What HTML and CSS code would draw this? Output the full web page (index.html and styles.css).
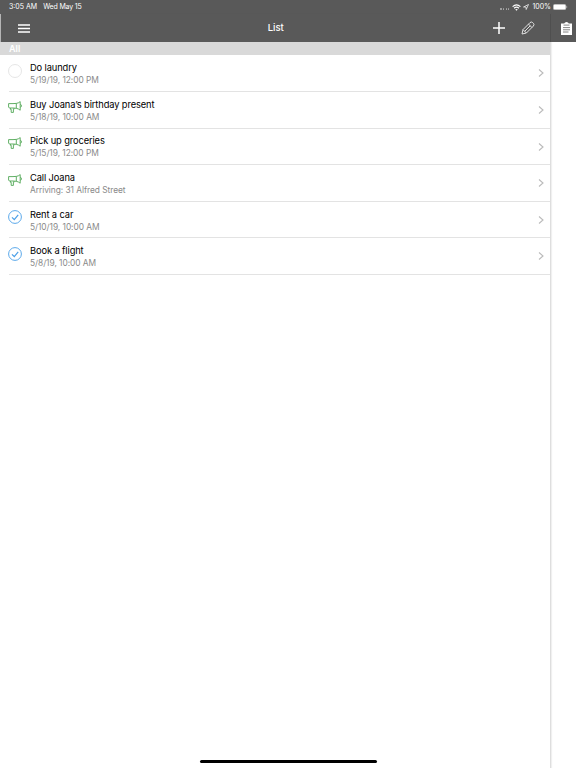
FILE: index.html
```html
<!DOCTYPE html>
<html lang="en">
<head>
    <meta charset="UTF-8">
    <meta name="viewport" content="width=device-width, initial-scale=1.0">
    <title>List</title>
    <link rel="stylesheet" href="styles.css">
</head>
<body>

    <!-- shared icons -->
    <svg class="defs" width="0" height="0">
        <symbol id="horn" viewBox="0 0 14 12">
            <path d="M0.6 2.6H5L8.3 2.4Q10.5 2.1 12.2 0.6V9.2Q10.5 7.7 8.3 7.3L5 7H1.4L0.6 6ZM8.3 2.4V7.3M2.4 7V8.3H3.2V11.4H5.4V8.3H6V7M12.4 3.4Q13.5 3.6 13.5 4.8Q13.5 6 12.4 6.2"/>
        </symbol>
        <symbol id="done" viewBox="0 0 14 14">
            <circle cx="7" cy="7" r="6.4"/>
            <path d="M4 7.3L6.3 9.6L10.2 4.9" stroke-width="1.2"/>
        </symbol>
        <symbol id="arrow" viewBox="0 0 6 8">
            <path d="M1 0.5L5 4L1 7.5"/>
        </symbol>
    </svg>

    <header class="status">
        <span class="time">3:05 AM</span>
        <span class="date">Wed May 15</span>
        <span class="dots"><i></i><i></i><i></i><i></i></span>
        <svg class="wifi" viewBox="0 0 9 7" width="9" height="7">
            <path d="M0.6 2.6Q4.5 -0.9 8.4 2.6M2.1 4.2Q4.5 2.1 6.9 4.2" fill="none" stroke="#fff" stroke-width="1.2"/>
            <path d="M4.5 6.8L3.2 5.4Q4.5 4.4 5.8 5.4Z" fill="#fff"/>
        </svg>
        <svg class="location" viewBox="0 0 6 6" width="6" height="6">
            <path d="M0.5 3L5.5 0.5L3.2 5.5L3 3Z" fill="none" stroke="#eee" stroke-width="0.8"/>
        </svg>
        <span class="percent">100%</span>
        <svg class="battery" viewBox="0 0 15 6" width="15" height="6">
            <rect x="0.3" y="0.3" width="12.6" height="5.4" rx="1.5" fill="#fff" stroke="#aaa" stroke-width="0.6"/>
            <path d="M13.7 2V4" stroke="#aaa" stroke-width="0.8"/>
        </svg>
    </header>

    <div class="split">
        <main class="master">
            <nav class="navbar">
                <svg class="menu" viewBox="0 0 12 9" width="12" height="9">
                    <path d="M0 1H12M0 4.5H12M0 8H12" stroke="#fff" stroke-width="1.5"/>
                </svg>
                <h1>List</h1>
                <svg class="add" viewBox="0 0 12 12" width="12" height="12">
                    <path d="M6 0V12M0 6H12" stroke="#fff" stroke-width="1.5"/>
                </svg>
                <svg class="pencil" viewBox="0 0 14 14" width="14" height="14">
                    <path d="M1 13L2 8.6L8.9 1.7Q10.3 0.3 11.7 1.6L12.4 2.3Q13.7 3.7 12.3 5.1L5.4 12ZM2 8.6L5.4 12M7.5 3.1L10.9 6.5M3.7 10.3L9.2 4.8" fill="none" stroke="#e2e2e2" stroke-width="1"/>
                </svg>
            </nav>
            <div class="section">All</div>
            <ul class="list">
                <li class="row">
                    <span class="icon"><span class="circle"></span></span>
                    <div class="text"><h2>Do laundry</h2><p>5/19/19, 12:00 PM</p></div>
                    <svg class="arrow"><use href="#arrow"/></svg>
                </li>
                <li class="row">
                    <span class="icon"><svg class="horn"><use href="#horn"/></svg></span>
                    <div class="text"><h2>Buy Joana’s birthday present</h2><p>5/18/19, 10:00 AM</p></div>
                    <svg class="arrow"><use href="#arrow"/></svg>
                </li>
                <li class="row">
                    <span class="icon"><svg class="horn"><use href="#horn"/></svg></span>
                    <div class="text"><h2>Pick up groceries</h2><p>5/15/19, 12:00 PM</p></div>
                    <svg class="arrow"><use href="#arrow"/></svg>
                </li>
                <li class="row">
                    <span class="icon"><svg class="horn"><use href="#horn"/></svg></span>
                    <div class="text"><h2>Call Joana</h2><p>Arriving: 31 Alfred Street</p></div>
                    <svg class="arrow"><use href="#arrow"/></svg>
                </li>
                <li class="row">
                    <span class="icon"><svg class="done"><use href="#done"/></svg></span>
                    <div class="text"><h2>Rent a car</h2><p>5/10/19, 10:00 AM</p></div>
                    <svg class="arrow"><use href="#arrow"/></svg>
                </li>
                <li class="row">
                    <span class="icon"><svg class="done"><use href="#done"/></svg></span>
                    <div class="text"><h2>Book a flight</h2><p>5/8/19, 10:00 AM</p></div>
                    <svg class="arrow"><use href="#arrow"/></svg>
                </li>
            </ul>
        </main>
        <aside class="detail">
            <div class="detail-bar">
                <svg viewBox="0 0 11 13" width="11" height="13">
                    <path d="M0 1.5H3.2Q3.8 0 5.5 0Q7.2 0 7.8 1.5H11V13H0Z" fill="#fff"/>
                    <path d="M2.5 3.1H8.5M2 5.6H9M2 7.8H9M2 10H7.5" stroke="#777" stroke-width="0.9"/>
                </svg>
            </div>
        </aside>
    </div>

    <div class="home-bar"></div>

</body>
</html>
```

FILE: styles.css
```css
* {
    box-sizing: border-box;
}
body {
    margin: 0;
    height: 768px;
    overflow: hidden;
    position: relative;
    display: flex;
    flex-direction: column;
    background: #fff;
    font-family: Inter, "Liberation Sans", sans-serif;
}
h1, h2, p, ul {
    margin: 0;
    padding: 0;
}
svg {
    flex: none;
    display: block;
}
.defs {
    position: absolute;
}
.status {
    height: 14px;
    flex: none;
    display: flex;
    align-items: center;
    padding: 0 8px 0 9px;
    background: #595959;
    color: #fff;
    font-size: 7px;
    line-height: 14px;
    white-space: nowrap;
}
.date {
    margin-left: 6px;
    letter-spacing: -0.15px;
}
.dots {
    display: flex;
    gap: 1.3px;
    margin: 4px 3px 0 auto;
}
.dots i {
    width: 1.3px;
    height: 1.3px;
    border-radius: 50%;
    background: #aaa;
}
.location {
    margin: 0 3px 0 2px;
}
.battery {
    margin-left: 2px;
}
.split {
    flex: 1;
    display: flex;
}
.master {
    width: 551px;
    border-right: 1px solid #dedede;
    box-shadow: 1px 0 1px rgba(0, 0, 0, 0.06);
}
.navbar {
    height: 28px;
    width: 551px;
    display: flex;
    align-items: center;
    padding: 0 15.5px 0 17px;
    background: #595959;
    border-left: 1px solid #b5b5b5;
    border-right: 1px solid #4f4f4f;
}
.navbar h1 {
    flex: 1;
    padding-left: 29px;
    color: #fff;
    font-size: 9.5px;
    font-weight: 500;
    line-height: 12px;
    text-align: center;
}
.pencil {
    margin-left: 16px;
}
.section {
    height: 13px;
    padding-left: 9px;
    background: #d9d9d9;
    color: #fff;
    font-size: 9px;
    font-weight: 600;
    line-height: 14px;
}
.list {
    padding-top: 0.4px;
    list-style: none;
}
.row {
    height: 36.6px;
    margin-left: 9px;
    display: flex;
    border-bottom: 1px solid #e3e3e3;
}
.icon {
    width: 21px;
    padding-top: 8.6px;
    margin-left: -1px;
}
.circle {
    display: block;
    width: 14px;
    height: 14px;
    border: 1px solid #e6e6e6;
    border-radius: 50%;
}
.horn {
    width: 14px;
    height: 12px;
    fill: none;
    stroke: #4fa653;
    stroke-width: 0.9;
}
.done {
    width: 14px;
    height: 14px;
    fill: none;
    stroke: #4a9fe8;
    stroke-width: 0.9;
}
.text {
    flex: 1;
    padding: 5.8px 0 0 1px;
    white-space: nowrap;
}
.text h2 {
    color: #000;
    font-size: 9.3px;
    font-weight: 400;
    letter-spacing: -0.11px;
    line-height: 13px;
}
.text p {
    color: #8a8a8a;
    font-size: 8.4px;
    letter-spacing: -0.05px;
    line-height: 12.4px;
}
.arrow {
    width: 6px;
    height: 8px;
    margin: 14px 6.5px 0 0;
    fill: none;
    stroke: #bbb;
    stroke-width: 1.1;
}
.detail {
    flex: 1;
}
.detail-bar {
    height: 28px;
    display: flex;
    align-items: center;
    padding-left: 10px;
    background: #595959;
}
.home-bar {
    position: absolute;
    left: 200px;
    bottom: 5px;
    width: 177px;
    height: 3px;
    border-radius: 2px;
    background: #000;
}
```
